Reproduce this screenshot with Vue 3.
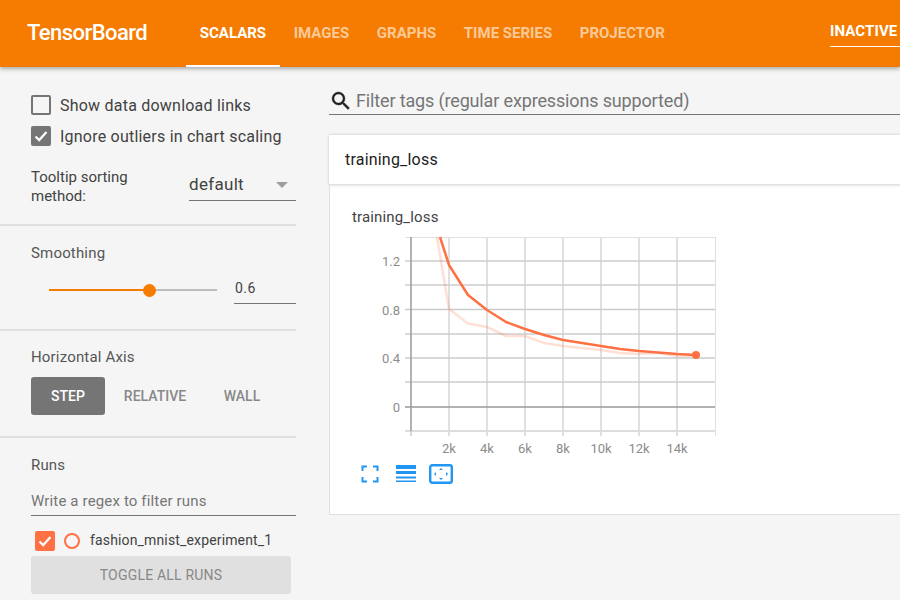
<template>
  <div class="page">
    <header class="topbar">
      <div class="logo">TensorBoard</div>
      <nav class="tabs">
        <a v-for="(tab, i) in tabs" :key="tab" :class="['tab', { active: i === 0 }]">{{ tab }}</a>
      </nav>
      <div class="inactive">INACTIVE</div>
    </header>

    <div class="content">
      <aside class="sidebar">
        <section class="side-section options">
          <label class="check-row">
            <span class="box"></span>
            <span>Show data download links</span>
          </label>
          <label class="check-row">
            <span class="box checked">
              <svg width="20" height="20" viewBox="0 0 20 20"><path d="M4.5 10.5l3.7 3.6 7.3-8" fill="none" stroke="#fff" stroke-width="2.2" /></svg>
            </span>
            <span>Ignore outliers in chart scaling</span>
          </label>
          <div class="sort-row">
            <div class="sort-label">Tooltip sorting method:</div>
            <div class="sort-select">
              <span>default</span>
              <i class="caret"></i>
            </div>
          </div>
        </section>

        <section class="side-section smoothing">
          <div class="side-title">Smoothing</div>
          <div class="slider-row">
            <div class="slider">
              <div class="slider-fill" :style="{ width: smoothing * 100 + '%' }"></div>
              <div class="slider-thumb" :style="{ left: smoothing * 100 + '%' }"></div>
            </div>
            <div class="slider-value">{{ smoothing }}</div>
          </div>
        </section>

        <section class="side-section axis">
          <div class="side-title">Horizontal Axis</div>
          <div class="axis-buttons">
            <button class="axis-btn on">STEP</button>
            <button class="axis-btn rel">RELATIVE</button>
            <button class="axis-btn wall">WALL</button>
          </div>
        </section>

        <section class="runs">
          <div class="side-title">Runs</div>
          <div class="run-filter">Write a regex to filter runs</div>
          <div class="run-row">
            <span class="box run-box">
              <svg width="20" height="20" viewBox="0 0 20 20"><path d="M4.5 10.5l3.7 3.6 7.3-8" fill="none" stroke="#fff" stroke-width="2.2" /></svg>
            </span>
            <span class="run-dot"></span>
            <span class="run-name">fashion_mnist_experiment_1</span>
          </div>
          <button class="toggle-runs">TOGGLE ALL RUNS</button>
        </section>
      </aside>

      <main class="main">
        <div class="search">
          <svg width="24" height="24" viewBox="0 0 24 24" class="search-icon">
            <path fill="#212121" stroke="#212121" stroke-width="0.4" d="M15.5 14h-.79l-.28-.27A6.47 6.47 0 0 0 16 9.5 6.5 6.5 0 1 0 9.5 16c1.61 0 3.09-.59 4.23-1.57l.27.28v.79l5 4.99L20.49 19l-4.99-5zm-6 0C7.01 14 5 11.99 5 9.5S7.01 5 9.5 5 14 7.01 14 9.5 11.99 14 9.5 14z" />
          </svg>
          <span>Filter tags (regular expressions supported)</span>
        </div>

        <div class="category">
          <div class="category-head">training_loss</div>
          <div class="category-body">
            <div class="chart-title">training_loss</div>
            <svg class="chart" width="380" height="226" viewBox="345 232 380 226">
              <g stroke="#e0e0e0" stroke-width="2">
                <line v-for="x in gridX" :key="x" :x1="x" y1="237" :x2="x" y2="436" />
              </g>
              <line x1="715.5" y1="237" x2="715.5" y2="436" stroke="#e0e0e0" />
              <g stroke="#ccc" stroke-width="1.5">
                <line v-for="y in gridY" :key="y" x1="405" :y1="y" x2="715" :y2="y" />
              </g>
              <line x1="405" y1="237.5" x2="715" y2="237.5" stroke="#e0e0e0" />
              <line x1="405" y1="431" x2="715" y2="431" stroke="#ddd" stroke-width="2" />
              <line x1="411" y1="237" x2="411" y2="431" stroke="#999" stroke-width="1.5" />
              <line x1="411" y1="431" x2="411" y2="436" stroke="#ccc" stroke-width="1.5" />
              <line x1="405" y1="407" x2="715" y2="407" stroke="#999" stroke-width="1.5" />
              <text v-for="t in yTicks" :key="t.label" x="400" :y="t.y + 5" text-anchor="end" class="tick">{{ t.label }}</text>
              <text v-for="t in xTicks" :key="t.label" :x="t.x" y="453" text-anchor="middle" class="tick">{{ t.label }}</text>
              <polyline :points="faint" fill="none" stroke="#ff7043" stroke-opacity="0.22" stroke-width="2.5" />
              <polyline :points="strong" fill="none" stroke="#ff7043" stroke-width="2.5" stroke-linejoin="round" />
              <circle cx="696" cy="355" r="4" fill="#ff7043" />
            </svg>
            <div class="chart-actions">
              <svg class="act-full" width="18" height="18" viewBox="0 0 18 18">
                <path d="M1.5 6V1.500H6M12 1.500h4.500V6M16.500 12v4.500H12M6 16.500H1.500V12" fill="none" stroke="#2196f3" stroke-width="2" />
              </svg>
              <svg class="act-lines" width="20" height="18" viewBox="0 0 20 18">
                <rect y="0" width="20" height="4" fill="#2196f3" />
                <rect y="6" width="20" height="3" fill="#2196f3" />
                <rect y="11.500" width="20" height="2" fill="#2196f3" />
                <rect y="15.500" width="20" height="1.500" fill="#2196f3" />
              </svg>
              <svg class="act-fit" width="24" height="20" viewBox="0 0 24 20">
                <rect x="1.200" y="1.200" width="21.600" height="17.600" rx="2" fill="#fff" stroke="#2196f3" stroke-width="2.400" />
                <path d="M12 4l-2 2h4zM12 16l-2-2h4zM5 10l2-2v4zM19 10l-2-2v4z" fill="#2196f3" />
              </svg>
            </div>
          </div>
        </div>
      </main>
    </div>
  </div>
</template>

<script setup>
const tabs = ['Scalars', 'Images', 'Graphs', 'Time Series', 'Projector']
const smoothing = 0.6

const gridX = [449, 487, 525, 563, 601, 639, 677]
const gridY = [261, 285, 309.500, 334, 358, 382]

const yTicks = [
  { label: '1.2', y: 261 },
  { label: '0.8', y: 309.500 },
  { label: '0.4', y: 358 },
  { label: '0', y: 407 },
]
const xTicks = gridX.map((x, i) => ({ x, label: `${(i + 1) * 2}k` }))

const strong = '440,237 449,265 468,295 487,310 506,322 525,329 544,335 563,340 582,343 601,346 620,349 639,351 658,352.500 677,354 696,355'
const faint = '437,237 449,309 468,323.500 487,327 506,336 525,336 544,343 563,346 582,348 601,350 620,353 639,354 658,353 677,356 696,356'
</script>

<style>
html, body {
  margin: 0;
  background: #f5f5f5;
  overflow: hidden;
}
</style>

<style scoped>
.page {
  width: 900px;
  height: 600px;
  overflow: hidden;
  background: #f5f5f5;
  font-family: Roboto, "Liberation Sans", sans-serif;
  color: #424242;
}

.topbar {
  position: relative;
  z-index: 2;
  height: 67px;
  display: flex;
  align-items: stretch;
  background: #f57c00;
  color: #fff;
  box-shadow: 0 2px 4px rgba(0, 0, 0, 0.3);
}

.logo {
  width: 186px;
  padding-left: 27px;
  box-sizing: border-box;
  font-size: 22px;
  font-weight: 500;
  line-height: 65px;
  letter-spacing: -0.55px;
}

.tabs {
  display: flex;
}

.tab {
  padding: 0 13.8px;
  font-size: 15px;
  font-weight: 700;
  line-height: 66px;
  text-transform: uppercase;
  color: rgba(255, 255, 255, 0.6);
}

.tab.active {
  height: 65px;
  color: #fff;
  border-bottom: 2px solid #fff;
}

.inactive {
  position: absolute;
  left: 830px;
  top: 21px;
  width: 70px;
  height: 25px;
  box-sizing: content-box;
  border-bottom: 1px solid #fff;
  font-size: 15px;
  font-weight: 700;
  line-height: 21px;
  letter-spacing: 0.1px;
}

.content {
  display: flex;
}

.sidebar {
  width: 296px;
  flex: none;
}

.side-section {
  border-bottom: 2px solid #e0e0e0;
  box-sizing: border-box;
}

.options {
  height: 159px;
  padding: 28px 0 0 31px;
}

.check-row {
  display: flex;
  align-items: center;
  gap: 9px;
  height: 20px;
  margin-bottom: 11px;
  font-size: 16px;
  letter-spacing: 0.22px;
}

.box {
  display: block;
  width: 20px;
  height: 20px;
  box-sizing: border-box;
  border: 2px solid #757575;
  border-radius: 2px;
  flex: none;
}

.box svg {
  display: block;
  margin: -2px;
}

.box.checked {
  background: #757575;
}

.sort-row {
  display: flex;
  margin-top: 22px;
}

.sort-label {
  width: 130px;
  margin-right: 28px;
  font-size: 15px;
  line-height: 19px;
}

.sort-select {
  position: relative;
  width: 107px;
  height: 32px;
  margin-top: 1px;
  box-sizing: border-box;
  border-bottom: 1px solid #757575;
  font-size: 17px;
  line-height: 30px;
  letter-spacing: 0.3px;
}

.caret {
  position: absolute;
  right: 8px;
  top: 13px;
  border-left: 6px solid transparent;
  border-right: 6px solid transparent;
  border-top: 6px solid #9e9e9e;
}

.side-title {
  font-size: 15px;
  line-height: 20px;
  letter-spacing: 0.17px;
  color: #555;
}

.smoothing {
  height: 105px;
  padding: 17px 0 0 31px;
}

.slider-row {
  display: flex;
  margin-top: 12px;
}

.slider {
  position: relative;
  width: 168px;
  height: 2px;
  margin: 14px 17px 0 18px;
  background: #bdbdbd;
}

.slider-fill {
  height: 2px;
  background: #f57c00;
}

.slider-thumb {
  position: absolute;
  top: -5.5px;
  width: 13px;
  height: 13px;
  margin-left: -6.5px;
  border-radius: 50%;
  background: #f57c00;
}

.slider-value {
  width: 62px;
  height: 29px;
  box-sizing: border-box;
  padding: 3px 0 0 1px;
  border-bottom: 1px solid #757575;
  font-size: 14px;
  line-height: 20px;
  letter-spacing: 0.5px;
}

.axis {
  height: 107px;
  padding: 16px 0 0 31px;
}

.axis-buttons {
  display: flex;
  margin-top: 10px;
}

.axis-btn {
  height: 38px;
  padding: 0;
  border: none;
  border-radius: 3px;
  background: none;
  font-family: inherit;
  font-size: 14px;
  font-weight: 500;
  color: #888;
}

.axis-btn.on {
  width: 74px;
  background: #757575;
  color: #fff;
}

.axis-btn.rel {
  width: 100px;
}

.axis-btn.wall {
  width: 74px;
}

.runs {
  padding: 17px 0 0 31px;
}

.run-filter {
  width: 265px;
  height: 31px;
  margin-top: 10px;
  padding-top: 6px;
  box-sizing: border-box;
  border-bottom: 1px solid #757575;
  font-size: 15px;
  line-height: 20px;
  letter-spacing: 0.15px;
  color: #757575;
}

.run-row {
  display: flex;
  align-items: center;
  height: 20px;
  margin: 15px 0 5px 4px;
}

.run-box {
  background: #ff7043;
  border-color: #ff7043;
}

.run-dot {
  width: 16px;
  height: 16px;
  margin-left: 9px;
  box-sizing: border-box;
  border: 2px solid #ff7043;
  border-radius: 50%;
}

.run-name {
  margin-left: 10px;
  padding-bottom: 2px;
  font-size: 14px;
  letter-spacing: 0.15px;
}

.toggle-runs {
  display: block;
  width: 260px;
  height: 38px;
  padding: 0;
  border: none;
  border-radius: 3px;
  background: #e0e0e0;
  font-family: inherit;
  font-size: 14px;
  color: #888;
  letter-spacing: 0.2px;
}

.main {
  flex: 1;
  min-width: 0;
  margin-left: 33px;
}

.search {
  display: flex;
  align-items: center;
  height: 27px;
  padding-top: 20px;
  box-sizing: content-box;
  border-bottom: 1px solid #757575;
  font-size: 18px;
  letter-spacing: -0.15px;
  color: #757575;
}

.search-icon {
  flex: none;
  margin-right: 3px;
}

.category {
  margin-top: 20px;
  background: #fff;
}

.category-head {
  height: 50px;
  padding-left: 16px;
  box-sizing: border-box;
  line-height: 49px;
  font-size: 16px;
  letter-spacing: 0.2px;
  color: #212121;
  box-shadow: 0 0 3px rgba(0, 0, 0, 0.2);
  background: #fff;
  border-bottom: 1px solid #e0e0e0;
}

.category-body {
  height: 330px;
  box-sizing: border-box;
  padding: 22px 0 0 22px;
  border-left: 1px solid #e0e0e0;
  border-bottom: 1px solid #e0e0e0;
}

.chart-title {
  font-size: 15px;
  line-height: 20px;
  letter-spacing: 0.15px;
}

.chart {
  display: block;
  margin: 5px 0 0 -7px;
}

.tick {
  font-family: Roboto, sans-serif;
  font-size: 13px;
  fill: #8c8c8c;
}

.chart-actions {
  display: flex;
  align-items: center;
  margin: 6px 0 0 9px;
}

.act-lines {
  margin-left: 17px;
}

.act-fit {
  margin-left: 13px;
}
</style>
